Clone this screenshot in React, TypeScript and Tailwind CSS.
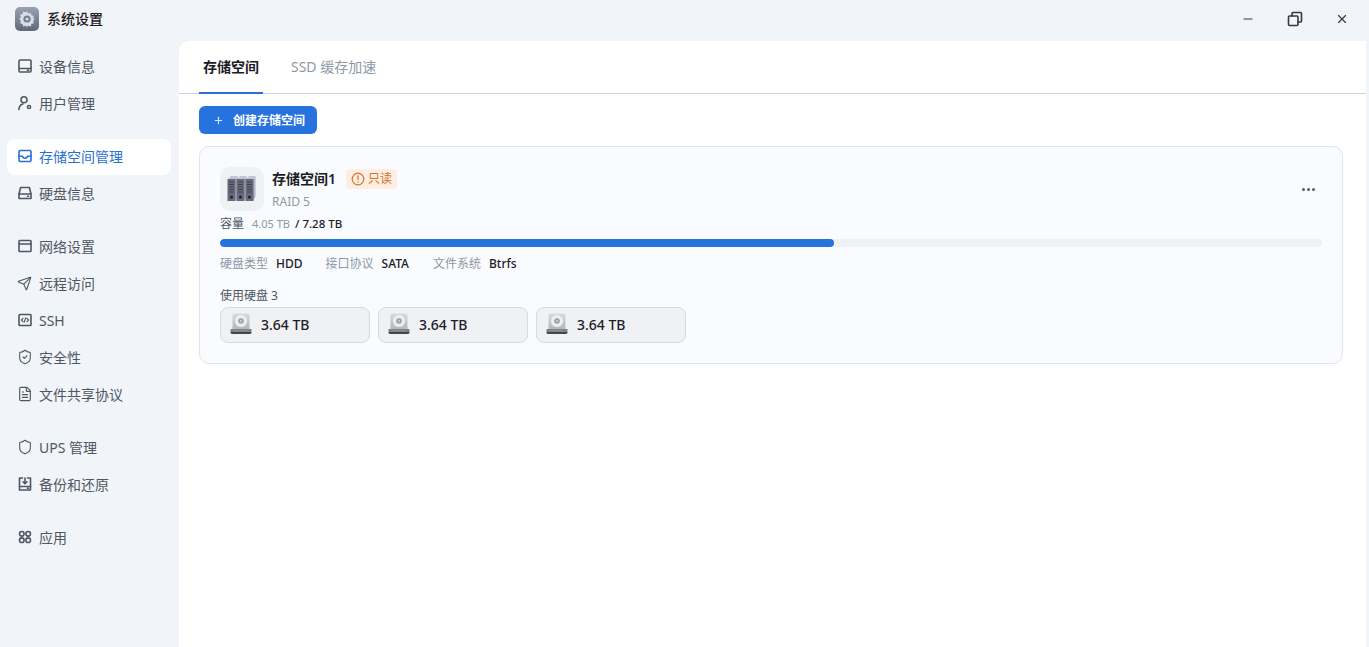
import { FileText, Minus, Plus, Send, Shield, ShieldCheck, X } from "lucide-react";
import type { ReactNode } from "react";

const stroke = {
  fill: "none",
  stroke: "currentColor",
  strokeWidth: 1.6,
  strokeLinecap: "round" as const,
  strokeLinejoin: "round" as const,
};

const Svg = ({ children }: { children: ReactNode }) => (
  <svg width="16" height="16" viewBox="0 0 16 16" {...stroke}>
    {children}
  </svg>
);

const DeviceIcon = () => (
  <Svg>
    <rect x="2" y="2" width="12" height="12" rx="1" />
    <path d="M2 10.5h12M10.5 12.3h1" />
  </Svg>
);
const UserIcon = () => (
  <Svg>
    <circle cx="7" cy="4.8" r="3" />
    <path d="M1.8 14.5c.3-3 2-5 4-5.6" />
    <circle cx="12" cy="12" r="1.6" strokeWidth="1.5" />
  </Svg>
);
const InboxIcon = () => (
  <Svg>
    <rect x="2" y="2.5" width="12" height="11" rx="1.2" />
    <path d="M2 8.2h3.4c.4 1.3 1.4 2 2.6 2s2.2-.7 2.6-2H14" />
  </Svg>
);
const DiskIcon = () => (
  <Svg>
    <path d="M3.6 2.5h8.8L14 9v4.5H2V9z" />
    <path d="M2 9h12M10.5 11.3h1" />
  </Svg>
);
const WindowIcon = () => (
  <Svg>
    <rect x="2" y="2.5" width="12" height="11" rx="0.8" />
    <path d="M2 6h12" />
  </Svg>
);
const CodeIcon = () => (
  <Svg>
    <rect x="2" y="2.5" width="12" height="11" rx="0.8" />
    <path d="M6 6.3 4.4 8 6 9.7M10 6.3 11.6 8 10 9.7M8.8 5.8 7.2 10.2" strokeWidth="1.1" />
  </Svg>
);
const BackupIcon = () => (
  <Svg>
    <path d="M5.5 2H2.5v12h11V2h-3" />
    <path d="M8 2v5.5M6 5.8l2 2 2-2M2.5 10.5h11M10.5 12.3h1" />
  </Svg>
);
const AppsIcon = () => (
  <Svg>
    <circle cx="4.8" cy="4.8" r="2.3" />
    <circle cx="11.2" cy="4.8" r="2.3" />
    <circle cx="4.8" cy="11.2" r="2.3" />
    <circle cx="11.2" cy="11.2" r="2.3" />
  </Svg>
);

const GROUPS: { label: string; icon: ReactNode; active?: boolean }[][] = [
  [
    { label: "设备信息", icon: <DeviceIcon /> },
    { label: "用户管理", icon: <UserIcon /> },
  ],
  [
    { label: "存储空间管理", icon: <InboxIcon />, active: true },
    { label: "硬盘信息", icon: <DiskIcon /> },
  ],
  [
    { label: "网络设置", icon: <WindowIcon /> },
    { label: "远程访问", icon: <Send size={15} strokeWidth={1.7} /> },
    { label: "SSH", icon: <CodeIcon /> },
    { label: "安全性", icon: <ShieldCheck size={16} strokeWidth={1.6} /> },
    { label: "文件共享协议", icon: <FileText size={16} strokeWidth={1.7} /> },
  ],
  [
    { label: "UPS 管理", icon: <Shield size={16} strokeWidth={1.6} /> },
    { label: "备份和还原", icon: <BackupIcon /> },
  ],
  [{ label: "应用", icon: <AppsIcon /> }],
];

const AppLogo = () => (
  <div className="grid h-6 w-6 place-items-center rounded-[5px] bg-gradient-to-b from-[#98a2b1] to-[#5f6979]">
    <svg width="18" height="18" viewBox="0 0 16 16">
      <path
        d="M8 1l1.2 2 2.2-.6.5 2.2 2.2.6-.6 2.2L15 8l-1.5 1.6.6 2.2-2.2.6-.5 2.2-2.2-.6L8 15l-1.2-1-2.2.6-.5-2.2-2.2-.6.6-2.2L1 8l1.5-1.6-.6-2.2 2.2-.6.5-2.2 2.2.6z"
        fill="#d9dde3"
      />
      <circle cx="8" cy="8" r="3.2" fill="#737c8c" />
      <circle cx="8" cy="8" r="1.4" fill="#d9dde3" />
    </svg>
  </div>
);

const ServerIcon = () => (
  <svg width="30" height="28" viewBox="0 0 30 28">
    {[0, 9, 18].map((x) => (
      <g key={x} transform={`translate(${x} 0)`}>
        <path d="M1 4 4 1h6.5L8 4z" fill="#c2c5d0" />
        <path d="M8 4l2.5-3v21L8 26z" fill="#b2b6c3" />
        <rect x="0.5" y="4" width="8" height="22" fill="#666a7c" />
        <path d="M2 7h5M2 9.5h5M2 12h5M2 14.5h5M2 17h5" stroke="#3f4250" strokeWidth="1" />
        <circle cx="4.5" cy="22" r="1.6" fill="#23252e" />
      </g>
    ))}
  </svg>
);

const HddIcon = () => (
  <svg width="22" height="22" viewBox="0 0 22 22">
    <defs>
      <linearGradient id="hdd-body" x1="0" y1="0" x2="0" y2="1">
        <stop offset="0" stopColor="#d8dadd" />
        <stop offset="1" stopColor="#b4b7bc" />
      </linearGradient>
    </defs>
    <path d="M2.5 2.5C2.5 1.4 3.4.5 4.5.5h13c1.100 0 2 .9 2 2V16h-17z" fill="url(#hdd-body)" />
    <circle cx="11" cy="8" r="6" fill="#eceef0" />
    <circle cx="11" cy="8" r="2.8" fill="#989ea6" />
    <circle cx="11" cy="8" r="1.2" fill="#c4c8cd" />
    <path d="M.5 16h21v3a2 2 0 0 1-2 2h-17a2 2 0 0 1-2-2z" fill="#7e8185" />
    <path d="M.5 19h21a2 2 0 0 1-2 2h-17a2 2 0 0 1-2-2z" fill="#45474a" />
    <path d="M4 17.5h14" stroke="#a89a6a" strokeWidth="1" strokeDasharray="1 1" />
  </svg>
);

const NavItem = ({ label, icon, active }: { label: string; icon: ReactNode; active?: boolean }) => (
  <div
    className={`flex h-9 items-center gap-[7px] rounded-[8px] pb-[2px] pl-[10px] text-[14px] ${
      active ? "bg-white text-[#2a6fd6]" : "text-[#4f5763]"
    }`}
  >
    <span className="grid h-4 w-[15px] shrink-0 place-items-center">{icon}</span>
    <span>{label}</span>
  </div>
);

const DiskChip = () => (
  <div className="flex h-9 w-[150px] items-center gap-[9px] rounded-[8px] border border-[#d5d9e0] bg-[#f0f1f5] pb-[2px] pl-[9px]">
    <HddIcon />
    <span className="text-[14px] font-medium text-[#1c2026]">3.64 TB</span>
  </div>
);

export default function App() {
  return (
    <div className="flex h-[647px] w-[1369px] flex-col overflow-hidden bg-[#f1f4f9] font-['Noto_Sans','Noto_Sans_CJK_SC',sans-serif]">
      <header className="flex h-[41px] shrink-0 items-center pb-[3px] pl-[15px]">
        <AppLogo />
        <span className="ml-2 pb-[2px] text-[14px] font-medium text-[#1c2026]">系统设置</span>
        <div className="ml-auto flex items-center text-[#333a45]">
          <Minus size={14} strokeWidth={2} />
          <svg className="ml-[32px]" width="16" height="16" viewBox="0 0 16 16" {...stroke}>
            <rect x="1.500" y="5" width="9.500" height="9.500" rx="1" />
            <path d="M5 5V2.500a1 1 0 0 1 1-1h7.500a1 1 0 0 1 1 1V10a1 1 0 0 1-1 1H11" />
          </svg>
          <X size={14} strokeWidth={2} className="ml-[32px] mr-[20px]" />
        </div>
      </header>

      <div className="flex min-h-0 flex-1">
        <nav className="flex w-[179px] shrink-0 flex-col gap-[17px] pl-[7px] pr-[8px] pt-[8px]">
          {GROUPS.map((group, i) => (
            <div key={i} className="flex flex-col gap-px">
              {group.map((item) => (
                <NavItem key={item.label} {...item} />
              ))}
            </div>
          ))}
        </nav>

        <main className="mr-[3px] min-w-0 flex-1 rounded-tl-[10px] bg-white">
          <div className="flex h-[53px] items-stretch border-b border-[#ccd3dc] pl-5">
            <div className="-mb-px flex w-16 items-center justify-center border-b-[2px] border-[#2a6fd6] pb-px text-[14px] font-semibold text-[#1c2026]">
              存储空间
            </div>
            <div className="ml-7 flex items-center pb-[2px] text-[14px] text-[#8f98a6]">SSD 缓存加速</div>
          </div>

          <div className="pl-5 pr-[23px] pt-3">
            <button className="flex h-7 w-[118px] items-center gap-[9px] rounded-[6px] bg-[#2673dd] pl-[14px] pt-[1px] text-[12px] font-semibold text-white">
              <Plus size={11} strokeWidth={2.4} className="text-[#dbe8fb]" />
              创建存储空间
            </button>

            <section className="mt-3 h-[218px] rounded-[10px] border border-[#e2e5ea] bg-[#f9fbfe] px-5 pt-5">
              <div className="flex h-11 items-center">
                <div className="grid h-11 w-11 place-items-center rounded-[10px] bg-[#eff1f5]">
                  <ServerIcon />
                </div>
                <div className="ml-2 flex flex-col pt-[2px]">
                  <div className="-mt-[2px] flex items-center">
                    <span className="text-[14px] font-semibold text-[#1c2026]">存储空间1</span>
                    <span className="ml-[10px] flex h-5 items-center gap-[3px] rounded-[4px] bg-[#fdeee2] px-[5px] text-[12px] text-[#d8722c]">
                      <svg width="14" height="14" viewBox="0 0 14 14" {...stroke} strokeWidth={1.2}>
                        <circle cx="7" cy="7" r="5.8" />
                        <path d="M7 3.800v3.800M7 9.900v.2" />
                      </svg>
                      只读
                    </span>
                  </div>
                  <span className="mt-[5px] text-[12px] leading-4 text-[#8f98a6]">RAID 5</span>
                </div>
                <div className="ml-auto mr-[7px] flex gap-[2px]">
                  <span className="h-[3px] w-[3px] rounded-full bg-[#555c68]" />
                  <span className="h-[3px] w-[3px] rounded-full bg-[#555c68]" />
                  <span className="h-[3px] w-[3px] rounded-full bg-[#555c68]" />
                </div>
              </div>

              <div className="mt-[3px] flex h-5 items-center text-[12px] text-[#4d5562]">
                容量
                <span className="ml-2 text-[11px] text-[#8f98a6]">4.05 TB</span>
                <span className="ml-[5px] text-[11.500px] font-medium text-[#1c2026]">/ 7.28 TB</span>
              </div>

              <div className="mt-[5px] h-2 overflow-hidden rounded-full bg-[#f0f1f4]">
                <div className="h-full rounded-full bg-[#2673dd]" style={{ width: "55.7%" }} />
              </div>

              <div className="mt-[7px] flex h-5 items-center text-[12px]">
                <span className="text-[#8f98a6]">硬盘类型</span>
                <span className="ml-2 font-medium text-[#1c2026]">HDD</span>
                <span className="ml-[23px] text-[#8f98a6]">接口协议</span>
                <span className="ml-2 font-medium text-[#1c2026]">SATA</span>
                <span className="ml-[24px] text-[#8f98a6]">文件系统</span>
                <span className="ml-2 text-[12px] font-medium text-[#1c2026]">Btrfs</span>
              </div>

              <div className="mt-[12px] flex h-5 items-center text-[12px] text-[#4d5562]">使用硬盘 3</div>
              <div className="mt-[1px] flex gap-2">
                <DiskChip />
                <DiskChip />
                <DiskChip />
              </div>
            </section>
          </div>
        </main>
      </div>
    </div>
  );
}
